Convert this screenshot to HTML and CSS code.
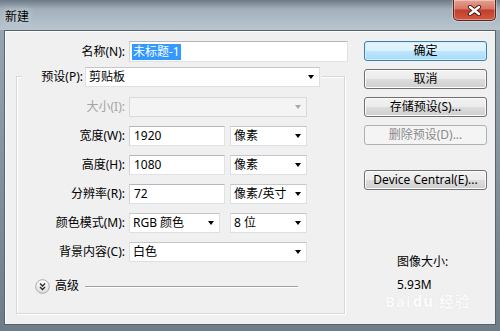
FILE: index.html
```html
<!DOCTYPE html>
<html lang="zh-CN">
<head>
  <meta charset="UTF-8" />
  <title>新建</title>
  <link rel="stylesheet" href="styles.css">
</head>
<body>
  <div class="window">
    <div class="titlebar">
      <span class="title">新建</span>
      <div class="close">
        <svg width="15" height="11" viewBox="0 0 15 11">
          <path d="M3 2 L12 9 M12 2 L3 9" stroke="#4a1a14" stroke-width="4.2" stroke-linecap="round"/>
          <path d="M3 2 L12 9 M12 2 L3 9" stroke="#fff" stroke-width="2.4" stroke-linecap="round"/>
        </svg>
      </div>
    </div>

    <div class="client">
      <div class="main">
        <div class="row name-row">
          <label class="lbl">名称(N):</label>
          <div class="field name-field"><span class="sel">未标题-1</span></div>
        </div>

        <div class="group">
          <div class="group-head">
            <label class="head-lbl">预设(P):</label>
            <div class="combo preset"><span>剪贴板</span><i class="arrow"></i></div>
          </div>

          <div class="rows">
            <div class="row">
              <label class="lbl off">大小(I):</label>
              <div class="combo off full"><span></span><i class="arrow"></i></div>
            </div>
            <div class="row">
              <label class="lbl">宽度(W):</label>
              <div class="field num">1920</div>
              <div class="combo unit"><span>像素</span><i class="arrow"></i></div>
            </div>
            <div class="row">
              <label class="lbl">高度(H):</label>
              <div class="field num">1080</div>
              <div class="combo unit"><span>像素</span><i class="arrow"></i></div>
            </div>
            <div class="row">
              <label class="lbl">分辨率(R):</label>
              <div class="field num">72</div>
              <div class="combo unit"><span>像素/英寸</span><i class="arrow"></i></div>
            </div>
            <div class="row">
              <label class="lbl">颜色模式(M):</label>
              <div class="combo mode"><span>RGB 颜色</span><i class="arrow"></i></div>
              <div class="combo unit bits"><span>8 位</span><i class="arrow"></i></div>
            </div>
            <div class="row">
              <label class="lbl">背景内容(C):</label>
              <div class="combo full"><span>白色</span><i class="arrow"></i></div>
            </div>
          </div>

          <div class="adv">
            <svg class="adv-icon" width="15" height="15" viewBox="0 0 15 15">
              <defs>
                <linearGradient id="g" x1="0" y1="0" x2="0" y2="1">
                  <stop offset="0" stop-color="#ffffff"/>
                  <stop offset="1" stop-color="#dcdcdc"/>
                </linearGradient>
              </defs>
              <circle cx="7.5" cy="7.5" r="6.8" fill="url(#g)" stroke="#a9a9a9"/>
              <path d="M5 4.5 L7.5 7 L10 4.5 M5 8 L7.5 10.5 L10 8" fill="none" stroke="#2b2b2b" stroke-width="1.3"/>
            </svg>
            <span class="adv-text">高级</span>
            <span class="adv-line"></span>
          </div>
        </div>
      </div>

      <div class="side">
        <button class="btn default">确定</button>
        <button class="btn">取消</button>
        <button class="btn">存储预设(S)...</button>
        <button class="btn" disabled>删除预设(D)...</button>
        <button class="btn device">Device Central(E)...</button>
        <div class="info">
          <div>图像大小:</div>
          <div>5.93M</div>
        </div>
      </div>
    </div>

    <div class="watermark">Bai<b>du</b> 经验</div>
  </div>
</body>
</html>
```

FILE: styles.css
```css
body {
  margin: 0;
  font-family: "Noto Sans", "Noto Sans CJK SC", sans-serif;
  font-size: 12px;
  color: #000;
}
.window {
  position: relative;
  width: 500px;
  height: 331px;
  overflow: hidden;
  display: flex;
  flex-direction: column;
  background: linear-gradient(#9aa8b3, #6f7d89);
}
.titlebar {
  height: 30px;
  box-sizing: border-box;
  padding: 0 4px 0 5px;
  display: flex;
  justify-content: space-between;
  align-items: flex-start;
  background: linear-gradient(#6c7a87 0, #a3b0bb 9px, #b9c5ce 30px);
}
.title {
  margin-top: 9px;
  line-height: 16px;
  text-shadow: 0 0 6px #e4eaef;
}
.close {
  width: 43px;
  height: 21px;
  box-sizing: border-box;
  border: 1px solid #5c241c;
  border-top: none;
  border-radius: 0 0 5px 5px;
  display: flex;
  align-items: center;
  justify-content: center;
  background: linear-gradient(#e6a192 0, #d57563 45%, #c23d2c 50%, #d25a44 100%);
  box-shadow: inset 0 0 0 1px rgba(255,255,255,.35), 0 0 0 1px rgba(255,255,255,.3);
}
.client {
  margin: 0 4px 6px 4px;
  height: 295px;
  box-sizing: border-box;
  border: 1px solid #56636e;
  background: #f0f0f0;
  box-shadow: inset 1px 1px 0 #fff;
  display: flex;
}
.main {
  width: 343px;
  padding-top: 10px;
}
.row {
  display: flex;
  align-items: center;
  height: 20px;
}
.name-row {
  height: 21px;
}
.lbl {
  width: 120px;
  margin-right: 4px;
  text-align: right;
  line-height: 16px;
  white-space: nowrap;
}
.lbl.off {
  color: #a3a3a3;
}
.field {
  height: 20px;
  box-sizing: border-box;
  background: #fff;
  border: 1px solid #dfe3e8;
  border-top-color: #b4b8be;
  border-left-color: #cfd3d8;
  padding-left: 4px;
  line-height: 18px;
}
.name-field {
  width: 219px;
  height: 21px;
  padding-left: 2px;
  display: flex;
  align-items: center;
}
.sel {
  background: #3399ff;
  color: #fff;
  line-height: 16px;
  padding: 0 1px;
}
.group {
  margin: 14px 0 0 11px;
  width: 329px;
  height: 238px;
  box-sizing: border-box;
  border: 1px solid #d3d9de;
  box-shadow: 1px 1px 0 #fff, inset 1px 1px 0 #fff;
}
.group-head {
  display: flex;
  align-items: center;
  width: fit-content;
  height: 20px;
  margin: -10px 0 0 5px;
  padding-right: 2px;
  background: #f0f0f0;
}
.head-lbl {
  width: 63px;
  box-sizing: border-box;
  padding-right: 2px;
  text-align: right;
  line-height: 16px;
}
.combo {
  height: 20px;
  box-sizing: border-box;
  background: #fff;
  border: 1px solid #dcdfe3;
  border-top-color: #c4c8cd;
  padding-left: 3px;
  display: flex;
  align-items: center;
  line-height: 16px;
  white-space: nowrap;
}
.arrow {
  margin-left: auto;
  margin-right: 5px;
  width: 0;
  height: 0;
  border-left: 3px solid transparent;
  border-right: 3px solid transparent;
  border-top: 4px solid #000;
}
.combo.off {
  background: #f4f4f4;
  border-color: #dadada;
}
.combo.off .arrow {
  border-top-color: #a8a8a8;
}
.preset {
  width: 235px;
}
.rows {
  margin-top: 10px;
  display: flex;
  flex-direction: column;
  gap: 9px;
}
.rows .lbl {
  width: 108px;
}
.full {
  width: 178px;
}
.num {
  width: 96px;
}
.unit {
  width: 77px;
  margin-left: 5px;
}
.mode {
  width: 91px;
}
.bits {
  margin-left: 10px;
}
.adv {
  display: flex;
  align-items: center;
  height: 16px;
  margin: 16px 0 0 18px;
}
.adv-icon {
  display: block;
}
.adv-text {
  margin-left: 5px;
  line-height: 16px;
}
.adv-line {
  margin-left: 6px;
  width: 213px;
  height: 1px;
  background: #a0a0a0;
  box-shadow: 0 1px 0 #fff;
}
.side {
  margin-left: 16px;
  width: 123px;
  padding-top: 10px;
  display: flex;
  flex-direction: column;
  gap: 8px;
}
.btn {
  height: 20px;
  padding: 0;
  font: inherit;
  line-height: 16px;
  color: #000;
  border: 1px solid #707070;
  border-radius: 3px;
  background: linear-gradient(#f2f2f2 0, #ebebeb 50%, #dddddd 51%, #cfcfcf 100%);
  box-shadow: inset 0 0 0 1px #fcfcfc;
}
.btn.default {
  border-color: #3c7fb1;
  background: linear-gradient(#eaf6fd 0, #d9f0fc 50%, #bee6fd 51%, #a7d9f5 100%);
  box-shadow: inset 0 0 0 1px #cfeffc;
}
.btn:disabled {
  color: #8a8a8a;
  border-color: #adb2b5;
  background: #f4f4f4;
  box-shadow: none;
}
.btn.device {
  margin-top: 17px;
}
.info {
  margin-top: 56px;
  padding-left: 33px;
  display: flex;
  flex-direction: column;
  gap: 7px;
  line-height: 16px;
}
.watermark {
  position: absolute;
  left: 385px;
  top: 290px;
  font-size: 15px;
  font-weight: bold;
  color: #fbfbfb;
  text-shadow: 0 0 1px #d6d6d6;
  letter-spacing: 1px;
}
.watermark b {
  margin-left: 1px;
}
```
